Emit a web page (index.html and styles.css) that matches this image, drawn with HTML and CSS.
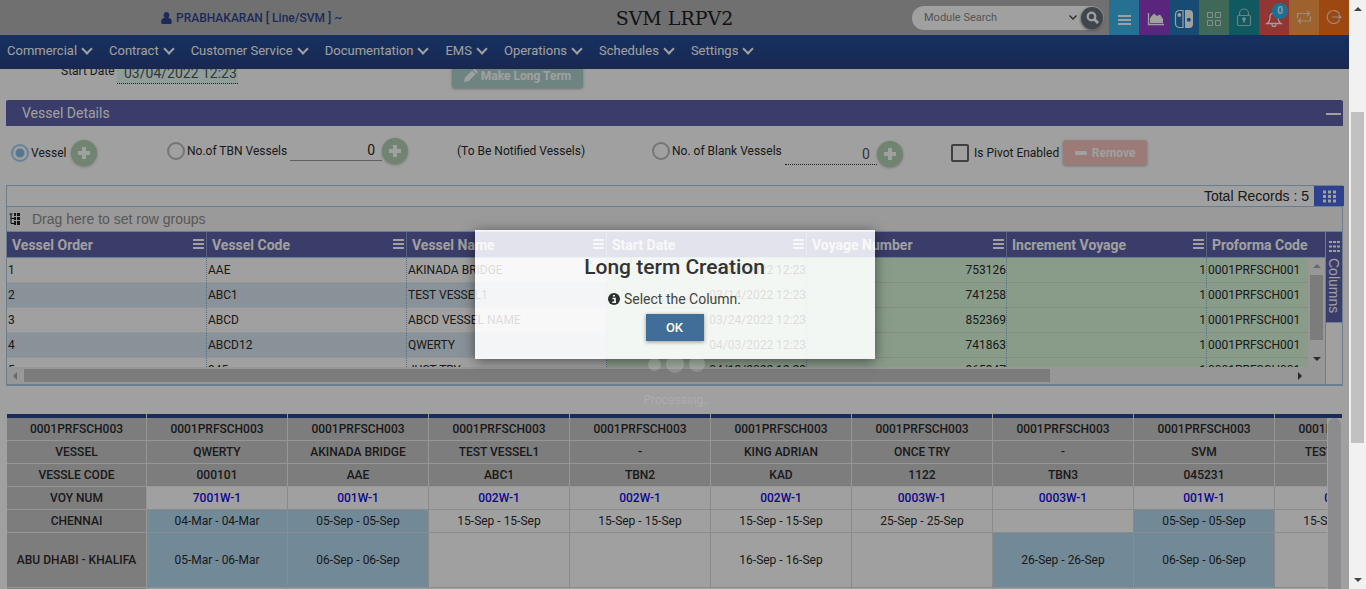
FILE: index.html
```html
<!DOCTYPE html>
<html lang="en">
<head>
<meta charset="utf-8">
<title>SVM LRPV2</title>
<link rel="stylesheet" href="styles.css">
</head>
<body>
<div class="page">
  <header class="topbar">
    <div class="user">
      <svg width="11" height="12" viewBox="0 0 11 12"><path fill="currentColor" d="M5.500 0a3 3.200 0 0 1 1.700 5.800C10 6 11 8 10.800 10.500 10.700 11.500 10 12 9 12H2C1 12 .3 11.500.2 10.500 0 8 1 6 3.800 5.800A3 3.200 0 0 1 5.500 0z"/></svg>
      <span>PRABHAKARAN [ Line/SVM ] ~</span>
    </div>
    <h1 class="brand">SVM LRPV2</h1>
    <div class="tools">
      <div class="search">
        <input type="text" placeholder="Module Search" aria-label="Module Search">
        <svg width="8" height="5" viewBox="0 0 8 5"><path d="M.5.500 4 4 7.500.5" fill="none" stroke="#444" stroke-width="1.300"/></svg>
        <button class="go" aria-label="Search"><svg width="13" height="13" viewBox="0 0 13 13"><g fill="none" stroke="#fff" stroke-width="2.200"><circle cx="5.500" cy="5.500" r="3.800"/><path d="M8.300 8.300 12 12" stroke-width="2.800"/></g></svg></button>
      </div>
      <button class="tile t1" aria-label="Menu"><svg width="30" height="35"><path d="M9 16h13M9 20h13M9 24h13" stroke="#fff" stroke-width="2"/></svg></button>
      <button class="tile t2" aria-label="Charts"><svg width="30" height="35"><path d="M9.500 13v11.500H25" fill="none" stroke="#fff" stroke-width="1.300"/><path d="M11 23v-5l4-4.500 3 2.500 3-1.500 3 4.500v4z" fill="#fff"/></svg></button>
      <button class="tile t3" aria-label="Layout"><svg width="30" height="35"><path d="M14 10.500H10.500a4 4 0 0 0-4 4v9a4 4 0 0 0 4 4H14z" fill="none" stroke="#fff" stroke-width="1.200"/><circle cx="10.300" cy="15" r="1.900" fill="#fff"/><path d="M16 10h4a4 4 0 0 1 4 4v10a4 4 0 0 1-4 4h-4z" fill="#fff"/><circle cx="19.800" cy="19.800" r="2" fill="#2778b9"/></svg></button>
      <button class="tile t4" aria-label="Apps"><svg width="30" height="35"><g fill="none" stroke="#d5e2dc"><path d="M8.500 12.500h5v5h-5zM16.500 12.500h5v5h-5zM8.500 20.500h5v5h-5zM16.500 20.500h5v5h-5z"/></g></svg></button>
      <button class="tile t5" aria-label="Lock"><svg width="30" height="35"><g fill="none" stroke="#a8cfd2" stroke-width="1.200"><rect x="8.500" y="15.500" width="13" height="10" rx="1.500"/><path d="M10.500 15v-1.500a4.500 4.500 0 0 1 9 0V15"/></g><circle cx="15" cy="19" r="1.800" fill="#c8e0e2"/><path d="M15 19v3.500" stroke="#c8e0e2" stroke-width="1.500"/></svg></button>
      <button class="tile t6" aria-label="Notifications"><svg width="30" height="35"><path d="M8 23.500c2.500-1.500 3-3.500 3-6.500a4 4 0 0 1 8 0c0 3 .5 5 3 6.500zM13 24.500a2 2 0 0 0 4 0" fill="none" stroke="#fff" stroke-width="1.300"/></svg><span class="badge">0</span></button>
      <button class="tile t7" aria-label="Switch"><svg width="30" height="35"><path d="M8.500 18v-4.500H20M18 11l2.800 2.500L18 16M21.500 16.500V21H10M12 18.500 9.200 21l2.800 2.500" fill="none" stroke="#f5e0cc" stroke-width="1.200"/></svg></button>
      <button class="tile t8" aria-label="Log out"><svg width="30" height="35"><path d="M20.500 14a6.500 6.500 0 1 0 0 6M13 17h9M19.500 15l2.500 2-2.500 2" fill="none" stroke="#f5e0d4" stroke-width="1.200"/></svg></button>
    </div>
  </header>
  <nav class="nav">
    <a href="#">Commercial</a><a href="#">Contract</a><a href="#">Customer Service</a><a href="#">Documentation</a><a href="#">EMS</a><a href="#">Operations</a><a href="#">Schedules</a><a href="#">Settings</a>
  </nav>

  <main class="content">
    <div class="dates">
      <label for="start">Start Date</label>
      <input id="start" type="text" value="03/04/2022 12:23">
      <button class="btn teal"><svg width="14" height="13" viewBox="0 0 14 13"><path fill="#fff" d="M0 13l1-4.500 7-6.800 3.600 3.600-7 6.700zM9 1 10 .2c.6-.4 1.200-.2 1.600.2l1.800 1.800c.5.5.6 1 .1 1.600l-1 1z"/></svg>Make Long Term</button>
    </div>

    <h2 class="panel-title"><span>Vessel Details</span><button class="collapse" aria-label="Collapse"></button></h2>

    <div class="options">
      <div class="opt"><input type="radio" name="kind" id="r1" checked><label for="r1">Vessel</label><button class="plus near" aria-label="Add vessel"></button></div>
      <div class="opt up"><input type="radio" name="kind" id="r2"><label for="r2">No.of TBN Vessels</label><input class="num" type="text" value="0" aria-label="TBN vessels"><button class="plus" aria-label="Add TBN vessel"></button></div>
      <div class="opt up">(To Be Notified Vessels)</div>
      <div class="opt up"><input type="radio" name="kind" id="r3"><label for="r3">No. of Blank Vessels</label><div class="low"><input class="num dotted" type="text" value="0" aria-label="Blank vessels"><button class="plus" aria-label="Add blank vessel"></button></div></div>
      <div class="opt"><input type="checkbox" id="pv"><label for="pv">Is Pivot Enabled</label><button class="btn red"><i class="dash"></i>Remove</button></div>
    </div>

    <section class="grid">
      <div class="grid-total"><span>Total Records :&nbsp;5</span><button class="dots" aria-label="Columns"><svg width="13" height="13"><path d="M0 2h13M0 6.500h13M0 11h13" stroke="#fff" stroke-width="3" stroke-dasharray="3 2"/></svg></button></div>
      <div class="grid-group"><svg width="11" height="12"><g stroke="#111" fill="none"><path d="M.5 1h3M2 1v9.500h3M2 5.500h3"/></g><path fill="#222" d="M5 0h2v3H5zM8 0h3v3H8zM5 4h2v3H5zM8 4h3v3H8zM5 8h2v4H5zM8 8h3v4H8z"/></svg>Drag here to set row groups</div>
      <div class="grid-main">
        <div class="grid-left">
          <div class="grid-view">
            <table class="data">
              <thead><tr><th class="m">Vessel Order</th><th class="m">Vessel Code</th><th class="m">Vessel Name</th><th class="m">Start Date</th><th class="m">Voyage Number</th><th class="m">Increment Voyage</th><th class="last">Proforma Code</th></tr></thead>
              <tbody>
                <tr><td>1</td><td>AAE</td><td>AKINADA BRIDGE</td><td>03/04/2022 12:23</td><td>753126</td><td>1</td><td>0001PRFSCH001</td></tr>
                <tr><td>2</td><td>ABC1</td><td>TEST VESSEL1</td><td>03/14/2022 12:23</td><td>741258</td><td>1</td><td>0001PRFSCH001</td></tr>
                <tr><td>3</td><td>ABCD</td><td>ABCD VESSEL NAME</td><td>03/24/2022 12:23</td><td>852369</td><td>1</td><td>0001PRFSCH001</td></tr>
                <tr><td>4</td><td>ABCD12</td><td>QWERTY</td><td>04/03/2022 12:23</td><td>741863</td><td>1</td><td>0001PRFSCH001</td></tr>
                <tr><td>5</td><td>345</td><td>JUST TRY</td><td>04/13/2022 12:23</td><td>865347</td><td>1</td><td>0001PRFSCH001</td></tr>
              </tbody>
            </table>
            <div class="vbar"><i class="ar up-arrow soft"></i><b></b><i class="ar down-arrow"></i></div>
          </div>
          <div class="hbar"><i class="ar left-arrow soft"></i><div class="htrack"><b></b></div><i class="ar right-arrow"></i></div>
        </div>
        <div class="grid-side"><button class="cols"><svg width="11" height="11"><path d="M0 1h11M0 5.500h11M0 10h11" stroke="#fff" stroke-width="2" stroke-dasharray="3 1"/></svg><span>Columns</span></button></div>
      </div>
    </section>

    <section class="sched">
      <table>
        <tr class="g top"><th>0001PRFSCH003</th><th>0001PRFSCH003</th><th>0001PRFSCH003</th><th>0001PRFSCH003</th><th>0001PRFSCH003</th><th>0001PRFSCH003</th><th>0001PRFSCH003</th><th>0001PRFSCH003</th><th>0001PRFSCH003</th><th>0001PRFSCH003</th></tr>
        <tr class="g"><th>VESSEL</th><th>QWERTY</th><th>AKINADA BRIDGE</th><th>TEST VESSEL1</th><th>-</th><th>KING ADRIAN</th><th>ONCE TRY</th><th>-</th><th>SVM</th><th>TEST VESSEL1</th></tr>
        <tr class="g"><th>VESSLE CODE</th><th>000101</th><th>AAE</th><th>ABC1</th><th>TBN2</th><th>KAD</th><th>1122</th><th>TBN3</th><th>045231</th><th></th></tr>
        <tr class="voy"><th>VOY NUM</th><td>7001W-1</td><td>001W-1</td><td>002W-1</td><td>002W-1</td><td>002W-1</td><td>0003W-1</td><td>0003W-1</td><td>001W-1</td><td>001W-1</td></tr>
        <tr><th>CHENNAI</th><td class="b">04-Mar - 04-Mar</td><td class="b">05-Sep - 05-Sep</td><td>15-Sep - 15-Sep</td><td>15-Sep - 15-Sep</td><td>15-Sep - 15-Sep</td><td>25-Sep - 25-Sep</td><td></td><td class="b">05-Sep - 05-Sep</td><td>15-Sep - 15-Sep</td></tr>
        <tr class="tall"><th>ABU DHABI - KHALIFA</th><td class="b">05-Mar - 06-Mar</td><td class="b">06-Sep - 06-Sep</td><td></td><td></td><td>16-Sep - 16-Sep</td><td></td><td class="b">26-Sep - 26-Sep</td><td class="b">06-Sep - 06-Sep</td><td></td></tr>
        <tr><th></th><td></td><td></td><td></td><td></td><td></td><td></td><td></td><td></td><td></td></tr>
      </table>
      <div class="sbar"><b></b></div>
    </section>
  </main>

  <div class="scrim"></div>
  <div class="loader"><div class="balls"><i class="s"></i><i class="l"></i><i class="n"></i></div><span>Processing..</span></div>
  <div class="modal" role="dialog" aria-labelledby="mt">
    <h2 id="mt">Long term Creation</h2>
    <p><svg width="12" height="12"><circle cx="6" cy="6" r="6" fill="#2b302e"/><path d="M4.500 5.500H7V9M4.300 9.300h3.700M5 2.700h2" stroke="#fff" stroke-width="1.600" fill="none"/></svg>Select the Column.</p>
    <button class="ok">OK</button>
  </div>
</div>
<div class="scroll"><i class="ar up-arrow"></i><div class="track"><b></b></div><i class="ar down-arrow"></i></div>
</body>
</html>
```
FILE: styles.css
```css
* { box-sizing: border-box; }
body { margin: 0; display: flex; height: 100vh; overflow: hidden; font: 12px Roboto, "Liberation Sans", sans-serif; color: #2a2a2a; }
button, input { font: inherit; color: inherit; border: 0; padding: 0; margin: 0; background: none; }
svg { display: block; flex: none; }
.page { flex: 1; min-width: 0; position: relative; overflow: hidden; background: #fff; }

.topbar { height: 35px; background: #b3b3b3; display: grid; grid-template-columns: 1fr auto 1fr; align-items: center; }
.user { display: flex; align-items: center; gap: 4px; padding-left: 161px; font-weight: 500; color: #2e4390; white-space: nowrap; }
.brand { margin: 0; font: 19px "DejaVu Serif", serif; color: #1c1c24; }
.tools { display: flex; align-items: center; justify-content: flex-end; }
.search { display: flex; align-items: center; gap: 4px; width: 192px; height: 24px; margin-right: 5px; padding: 0 1px 0 12px; border-radius: 12px; background: #fff; }
.search input { flex: 1; min-width: 0; outline: 0; font-size: 11px; }
.search input::placeholder { color: #888; }
.go { width: 22px; height: 22px; border-radius: 50%; background: #66707c; display: grid; place-items: center; box-shadow: 0 1px 3px #666; }
.tile { width: 30px; height: 35px; position: relative; }
.t1 { background: #3ab4ea; } .t2 { background: #8e3cc8; } .t3 { background: #2778b9; } .t4 { background: #66a68e; }
.t5 { background: #1c8e99; } .t6 { background: #e85650; } .t7 { background: #fa9c48; } .t8 { background: #fa741c; }
.badge { position: absolute; top: 3px; right: 1px; width: 16px; height: 16px; border-radius: 50%; background: #29b6e8; color: #fff; font-size: 10px; line-height: 16px; font-weight: 500; }

.nav { height: 34px; display: flex; align-items: center; gap: 17px; padding: 0 7px 3px; background: linear-gradient(#234f9c, #293f80); position: relative; z-index: 1; }
.nav a { display: flex; align-items: center; gap: 5px; color: #fff; font-size: 13px; text-decoration: none; white-space: nowrap; }
.nav a::after { content: ""; width: 6px; height: 6px; margin: 0 1px 3px 1px; border: solid #fff; border-width: 0 2px 2px 0; transform: rotate(45deg); }

.content { padding: 0 6px; margin-top: -6px; }
.dates { display: flex; height: 25px; margin-bottom: 12px; }
.dates label { width: 111px; padding-left: 55px; line-height: 16px; white-space: nowrap; }
.dates input { width: 121px; height: 21px; padding-left: 7px; font-size: 14px; color: #555; background: #e6fcf8; border-bottom: 1px dotted #333; }
.btn { display: flex; align-items: center; justify-content: center; gap: 3px; height: 25px; color: #fff; font-weight: 700; border-radius: 3px; box-shadow: 0 1px 3px rgba(0,0,0,.3); }
.teal { width: 131px; margin-left: 214px; background: #b0d3cd; }
.red { width: 84px; background: #f7c4be; gap: 5px; }
.opt .red { margin-left: 4px; }
.dash { width: 12px; height: 4px; border-radius: 1px; background: #fff; }

.panel-title { margin: 0; height: 26px; padding: 0 2px 1px 16px; display: flex; align-items: center; justify-content: space-between; background: #5d60a8; color: #fff; font-size: 14px; font-weight: 400; border-radius: 2px 2px 0 0; }
.collapse { width: 15px; height: 2px; margin-top: 3px; background: #fff; }
.options { height: 59px; padding: 0 0 6px 5px; display: grid; grid-template-columns: 156fr 290fr 195fr 299fr 392fr; align-items: center; }
.opt { display: flex; align-items: center; white-space: nowrap; }
.opt.up { padding-bottom: 4px; }
.opt input[type=radio] { appearance: none; width: 18px; height: 18px; margin-right: 2px; border: 2px solid #bbb; border-radius: 50%; }
.opt input[type=radio]:checked { border-color: #a5d2ee; background: radial-gradient(circle, #85c1e9 0 4px, transparent 5px); }
.opt input[type=checkbox] { appearance: none; width: 18px; height: 18px; margin-right: 5px; border: 2px solid #666; border-radius: 2px; }
.num { width: 92px; height: 21px; margin-left: 3px; padding-right: 7px; text-align: right; font-size: 14px; border-bottom: 1px solid #999; }
.dotted { border-bottom: 1px dotted #333; color: #555; }
.low { display: flex; align-items: center; padding-top: 7px; }
.plus { width: 26px; height: 26px; border-radius: 50%; background: linear-gradient(#fff, #fff) center/12px 4px no-repeat, linear-gradient(#fff, #fff) center/4px 12px no-repeat, #b4d2b4; box-shadow: 0 1px 3px rgba(0,0,0,.25); }
.near { margin-left: 5px; }

.grid { border: 1px solid #a5cbe8; border-bottom: 2px solid #a5cbe8; }
.grid-total { height: 21px; display: flex; justify-content: flex-end; align-items: center; gap: 5px; font: 14px "Liberation Sans", sans-serif; border-bottom: 1px solid #a5cbe8; }
.dots { width: 30px; height: 20px; display: grid; place-items: center; background: #4868e0; margin-right: -2px; }
.grid-group { height: 25px; display: flex; align-items: center; gap: 12px; padding-left: 2px; font: 14px "Liberation Sans", sans-serif; color: #8c8c8c; background: #f5f5f5; border-bottom: 1px solid #a5cbe8; }
.grid-main { display: flex; }
.grid-left { flex: 1; min-width: 0; }
.grid-view { height: 135px; overflow: hidden; position: relative; }
.data { width: 100%; table-layout: fixed; border-collapse: separate; border-spacing: 0; }
.data th { width: 200px; height: 26px; padding: 0 5px; text-align: left; font-size: 14px; font-weight: 500; font-weight: 700; color: #fff; background: #5d60a8 ; border-right: 1px solid #8e9cc8; border-bottom: 1px solid #a5cbe8; white-space: nowrap; }
.data th.last { width: auto; border-right: 0; }
.data th.m { background: linear-gradient(#fff, #fff) right 2px top 7px/11px 2px no-repeat, linear-gradient(#fff, #fff) right 2px top 11px/11px 2px no-repeat, linear-gradient(#fff, #fff) right 2px top 15px/11px 2px no-repeat, #5d60a8; }
.data td { height: 25px; padding: 0 1px; white-space: nowrap; border-right: 1px dotted #85b5e0; border-bottom: 1px solid #eee; }
.data tr:nth-child(even) td { background: #dde9f4; }
.data td:nth-child(n+4), .data tr:nth-child(even) td:nth-child(n+4) { background: #daf8da; border-bottom-color: #d4dfd4; }
.data td:nth-child(4), .data td:nth-child(5), .data td:nth-child(6) { text-align: right; padding-right: 0; }
.vbar { position: absolute; top: 26px; right: 0; bottom: 0; width: 17px; background: #f1f1f1; display: flex; flex-direction: column; align-items: center; padding: 6px 0; }
.vbar b { width: 13px; height: 65px; margin: 7px 0 auto; background: #c6c6c8; }
.hbar { height: 17px; display: flex; align-items: center; background: #f1f1f1; padding: 0 23px 0 6px; gap: 7px; }
.htrack { flex: 1; }
.htrack b { display: block; width: 81%; height: 13px; background: #c6c6c8; }
.ar { width: 0; height: 0; border: 4px solid transparent; flex: none; }
.up-arrow { border-top: 0; border-bottom-color: #444; }
.down-arrow { border-bottom: 0; border-top-color: #444; }
.left-arrow { border-left: 0; border-right-color: #444; }
.right-arrow { border-right: 0; border-left-color: #444; }
.up-arrow.soft { border-bottom-color: #aaa; }
.left-arrow.soft { border-right-color: #aaa; }
.grid-side { width: 17px; border-left: 1px solid #a5cbe8; }
.cols { width: 16px; height: 91px; padding: 9px 0 0; display: flex; flex-direction: column; align-items: center; gap: 6px; background: #5d60a8; color: #fff; border-bottom: 1px solid #a5cbe8; }
.cols span { writing-mode: vertical-rl; font: 14px/16px "Liberation Sans", sans-serif; }

.sched { position: relative; overflow: hidden; margin: 28px 1px 0; }
.sched table { width: 1409px; table-layout: fixed; border-spacing: 0; }
.sched th, .sched td { width: 141px; height: 23px; padding: 0; text-align: center; white-space: nowrap; border-right: 1px solid #dedede; border-bottom: 1px solid #dedede; }
.sched th:first-child { width: 140px; }
.sched th { background: #c7c7c9; font-weight: 500; border-color: #efefef; }
.sched .top th { height: 27px; padding-top: 4px; box-shadow: inset 0 4px #27498f; }
.sched .voy td { color: #1a0ce0; font-weight: 500; }
.sched .tall th, .sched .tall td { height: 55px; }
.sched .b { background: #b6dcf2; }
.sbar { position: absolute; top: 4px; right: 0; bottom: 0; width: 15px; padding: 0 1px; background: #fff; }
.sbar b { display: block; height: 100%; border-radius: 7px 7px 0 0; background: #dfdfe2; }

.scrim { position: absolute; inset: 0; margin: auto; width: 400px; height: 129px; z-index: 2; box-shadow: 0 2px 12px rgba(0,0,0,.5), 0 0 0 2000px rgba(0,0,0,.373); }
.loader { position: absolute; z-index: 3; top: 355px; left: 0; right: 0; padding-left: 4px; display: flex; flex-direction: column; align-items: center; gap: 20px; color: #adadad; }
.balls { display: flex; align-items: center; gap: 5px; }
.balls i { border-radius: 50%; background: rgba(255,255,255,.17); }
.balls .s { width: 13px; height: 13px; } .balls .l { width: 18px; height: 18px; } .balls .n { width: 16px; height: 16px; }
.modal { position: absolute; inset: 0; margin: auto; z-index: 4; width: 400px; height: fit-content; padding: 24px 0 18px; display: flex; flex-direction: column; align-items: center; background: rgba(247,247,247,.866); }
.modal h2 { margin: 0; font-size: 21px; line-height: 26px; font-weight: 500; color: #333; }
.modal p { margin: 10px 0 6px; display: flex; align-items: center; gap: 4px; font-size: 14px; line-height: 18px; color: #444; }
.ok { width: 58px; height: 27px; background: #416e98; color: #fff; font-size: 13px; font-weight: 500; box-shadow: 0 1px 4px rgba(0,0,0,.4); }

.scroll { width: 17px; background: #f1f1f1; display: flex; flex-direction: column; align-items: center; padding: 7px 0; }
.track { flex: 1; width: 13px; padding-top: 101px; }
.track b { display: block; height: 71%; background: #c1c1c1; }
```
